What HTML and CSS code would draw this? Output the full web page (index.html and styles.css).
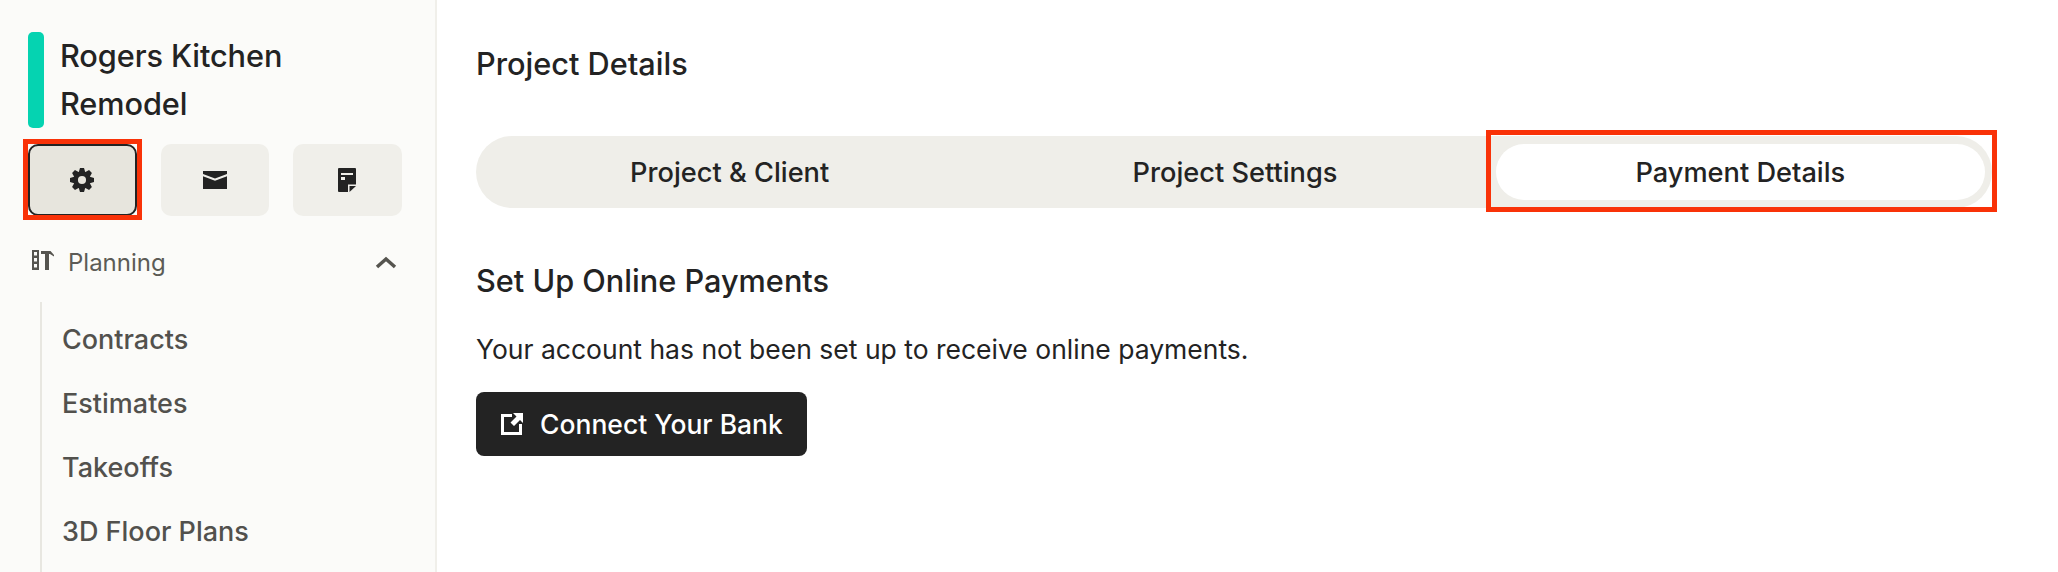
FILE: index.html
```html
<!DOCTYPE html>
<html lang="en">
<head>
<meta charset="utf-8">
<title>Project Details</title>
<link rel="stylesheet" href="styles.css">
</head>
<body>
<div class="app">
  <aside class="sidebar">
    <div class="project">
      <span class="project-bar"></span>
      <h1 class="project-name">Rogers Kitchen Remodel</h1>
    </div>
    <div class="actions">
      <button class="action action-active" aria-label="Settings">
        <svg class="action-icon" viewBox="-12 -12 24 24">
          <circle class="gear-ring" r="6.300"/>
          <polygon id="tooth" points="-2,-12 2,-12 3.500,-7 -3.500,-7"/>
          <use href="#tooth" transform="rotate(45)"/>
          <use href="#tooth" transform="rotate(90)"/>
          <use href="#tooth" transform="rotate(135)"/>
          <use href="#tooth" transform="rotate(180)"/>
          <use href="#tooth" transform="rotate(225)"/>
          <use href="#tooth" transform="rotate(270)"/>
          <use href="#tooth" transform="rotate(315)"/>
        </svg>
        <span class="annotation annotation-action"></span>
      </button>
      <button class="action" aria-label="Messages">
        <svg class="action-icon" viewBox="0 0 24 24"><path d="M0 3h24v3l-12 4.500L0 6zM0 8.200l12 4.500 12-4.500V21H0z"/></svg>
      </button>
      <button class="action" aria-label="Notes">
        <svg class="action-icon" viewBox="0 0 24 24"><path fill-rule="evenodd" d="M4 0h16a1 1 0 0 1 1 1v15.500h-8V24H4a1 1 0 0 1-1-1V1a1 1 0 0 1 1-1zM6 5v2h12V5zM6 9v3h4V9z"/><path d="M14.500 18H21l-6.500 6z"/></svg>
      </button>
    </div>
    <div class="group-head">
      <svg class="group-icon" viewBox="0 0 22 20"><path fill-rule="evenodd" d="M0 0h7v20H0zM2 2v3.500h3V2zM2 8v3.500h3V8zM2 14v3.500h3V14z"/><path d="M9 1h9.500l3.500 4v1.500L18 4h-1v16h-4V4H9z"/></svg>
      <span class="group-label">Planning</span>
      <svg class="chevron" viewBox="0 0 22 13"><path d="M2 11l9-8 9 8"/></svg>
    </div>
    <nav class="nav">
      <a class="nav-item">Contracts</a>
      <a class="nav-item">Estimates</a>
      <a class="nav-item">Takeoffs</a>
      <a class="nav-item">3D Floor Plans</a>
    </nav>
  </aside>
  <main class="main">
    <h2 class="page-title">Project Details</h2>
    <div class="tabs">
      <div class="tab">Project &amp; Client</div>
      <div class="tab">Project Settings</div>
      <div class="tab tab-active">Payment Details</div>
      <span class="annotation annotation-tab"></span>
    </div>
    <h3 class="section-title">Set Up Online Payments</h3>
    <p class="section-text">Your account has not been set up to receive online payments.</p>
    <button class="connect">
      <svg class="connect-icon" viewBox="0 0 22 22"><path d="M0 1h11v3H3v15h15v-8h3v11H0z"/><path d="M12 0h10v10l-3-3-6 6-3.500-3.500 6-6z"/></svg>
      Connect Your Bank
    </button>
  </main>
</div>
</body>
</html>
```
FILE: styles.css
```css
* { box-sizing: border-box; }
html, body { margin: 0; height: 100%; overflow: hidden; background: #fff; }
body { font-family: "Inter", "Liberation Sans", sans-serif; color: #232323; }
.app { display: flex; height: 572px; overflow: hidden; }
.sidebar { width: 437px; height: 572px; flex: none; overflow: hidden; background: #fbfbf9; border-right: 2px solid #f0efea; padding: 32px 33px 0 28px; }
.project { display: flex; gap: 16px; }
.project-bar { width: 16px; height: 96px; flex: none; background: #05d3b1; border-radius: 5px; }
.project-name { margin: 0; width: 280px; font-size: 30.700px; line-height: 48px; font-weight: 500; letter-spacing: -.1px; }
.actions { display: grid; grid-template-columns: repeat(3, 108.500px); gap: 24px; margin-top: 16px; }
.action { position: relative; height: 72px; display: flex; align-items: center; justify-content: center; border: 0; padding: 0; border-radius: 10px; background: #f0efea; }
.action-active { background: #e7e5dd; border: 2px solid #232323; }
.action-icon { width: 24px; height: 24px; fill: #232323; }
.gear-ring { fill: none; stroke: #232323; stroke-width: 4.500; }
.annotation { position: absolute; border: 5px solid #f93208; }
.annotation-action { top: -7px; right: -7px; bottom: -6px; left: -7px; }
.annotation-tab { top: -6px; right: -5px; bottom: -4px; width: 511px; }
.group-head { display: flex; align-items: center; height: 30px; margin-top: 31px; padding-left: 4px; }
.group-icon { width: 22px; height: 20px; fill: #55544f; margin-top: -4px; }
.group-label { margin-left: 14px; font-size: 24px; color: #5c5b56; }
.chevron { width: 22px; height: 13px; margin-left: auto; margin-right: 5px; fill: none; stroke: #55544f; stroke-width: 3.500; }
.nav { display: flex; flex-direction: column; margin: 25px 0 0 12px; border-left: 2px solid #e8e7e1; padding-left: 20px; padding-top: 5px; height: 400px; }
.nav-item { height: 64px; flex: none; display: flex; align-items: center; font-size: 27px; font-weight: 500; color: #52514d; }
.main { flex: 1; min-width: 0; padding: 46px 66px 0 39px; }
.page-title { margin: 0; font-size: 30.700px; line-height: 36px; font-weight: 500; }
.tabs { position: relative; display: grid; grid-template-columns: repeat(3, 1fr); height: 72px; margin-top: 54px; background: #efeee9; border-radius: 36px; }
.tab { display: flex; align-items: center; justify-content: center; margin: 8px 7px 8px 9px; border-radius: 28px; font-size: 27.200px; font-weight: 500; }
.tab-active { background: #fff; }
.section-title { margin: 55px 0 0; font-size: 30.700px; line-height: 36px; font-weight: 500; }
.section-text { margin: 32px 0 0; font-size: 26.500px; line-height: 36px; font-weight: 400; }
.connect { display: flex; align-items: center; gap: 17px; height: 64px; width: 331px; margin-top: 25px; padding: 0 0 0 25px; border: 0; border-radius: 8px; background: #232323; color: #fff; font: 500 26.500px "Inter", "Liberation Sans", sans-serif; }
.connect-icon { width: 22px; height: 22px; fill: #fff; flex: none; }
```
